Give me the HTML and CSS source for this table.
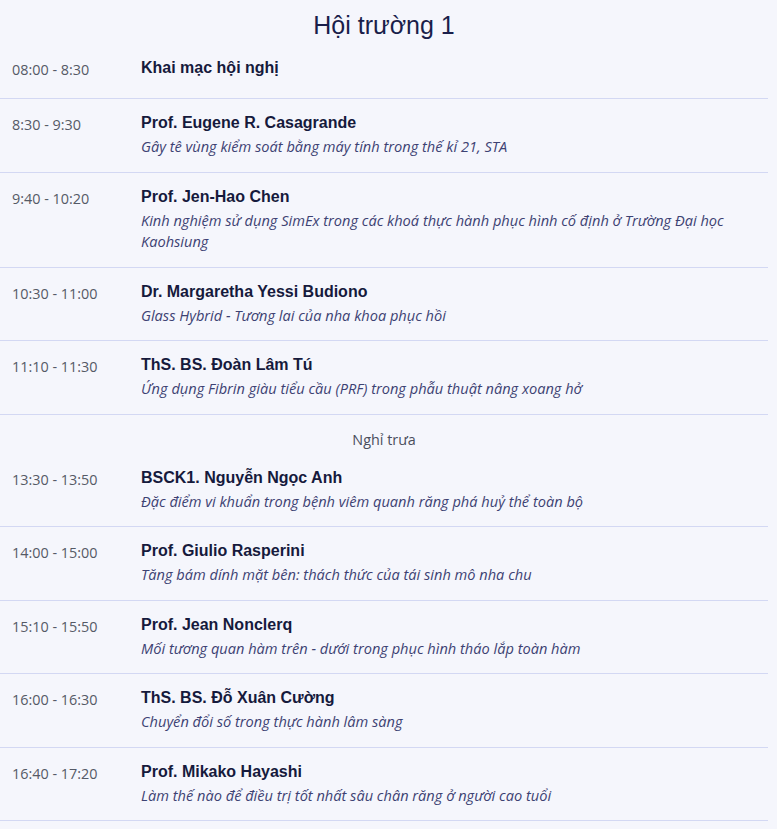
FILE: index.html
```html
<!DOCTYPE html>
<html lang="vi">
<head>
<meta charset="utf-8">
<title>Hội trường 1</title>
<link rel="stylesheet" href="styles.css">
</head>
<body>
<div class="schedule">
  <h2 class="hall-title">Hội trường 1</h2>

  <div class="row row--single">
    <div class="time">08:00 - 8:30</div>
    <div class="info"><div class="name">Khai mạc hội nghị</div></div>
  </div>

  <div class="row">
    <div class="time">8:30 - 9:30</div>
    <div class="info">
      <div class="name">Prof. Eugene R. Casagrande</div>
      <div class="topic">Gây tê vùng kiểm soát bằng máy tính trong thế kỉ 21, STA</div>
    </div>
  </div>

  <div class="row">
    <div class="time">9:40 - 10:20</div>
    <div class="info">
      <div class="name">Prof. Jen-Hao Chen</div>
      <div class="topic">Kinh nghiệm sử dụng SimEx trong các khoá thực hành phục hình cố định ở Trường Đại học Kaohsiung</div>
    </div>
  </div>

  <div class="row">
    <div class="time">10:30 - 11:00</div>
    <div class="info">
      <div class="name">Dr. Margaretha Yessi Budiono</div>
      <div class="topic">Glass Hybrid - Tương lai của nha khoa phục hồi</div>
    </div>
  </div>

  <div class="row">
    <div class="time">11:10 - 11:30</div>
    <div class="info">
      <div class="name">ThS. BS. Đoàn Lâm Tú</div>
      <div class="topic">Ứng dụng Fibrin giàu tiểu cầu (PRF) trong phẫu thuật nâng xoang hở</div>
    </div>
  </div>

  <div class="break">Nghỉ trưa</div>

  <div class="row">
    <div class="time">13:30 - 13:50</div>
    <div class="info">
      <div class="name">BSCK1. Nguyễn Ngọc Anh</div>
      <div class="topic">Đặc điểm vi khuẩn trong bệnh viêm quanh răng phá huỷ thể toàn bộ</div>
    </div>
  </div>

  <div class="row">
    <div class="time">14:00 - 15:00</div>
    <div class="info">
      <div class="name">Prof. Giulio Rasperini</div>
      <div class="topic">Tăng bám dính mặt bên: thách thức của tái sinh mô nha chu</div>
    </div>
  </div>

  <div class="row">
    <div class="time">15:10 - 15:50</div>
    <div class="info">
      <div class="name">Prof. Jean Nonclerq</div>
      <div class="topic">Mối tương quan hàm trên - dưới trong phục hình tháo lắp toàn hàm</div>
    </div>
  </div>

  <div class="row">
    <div class="time">16:00 - 16:30</div>
    <div class="info">
      <div class="name">ThS. BS. Đỗ Xuân Cường</div>
      <div class="topic">Chuyển đổi số trong thực hành lâm sàng</div>
    </div>
  </div>

  <div class="row">
    <div class="time">16:40 - 17:20</div>
    <div class="info">
      <div class="name">Prof. Mikako Hayashi</div>
      <div class="topic">Làm thế nào để điều trị tốt nhất sâu chân răng ở người cao tuổi</div>
    </div>
  </div>
</div>
</body>
</html>
```

FILE: styles.css
```css
html, body {
  margin: 0;
  padding: 0;
  background: #f5f6fc;
}

.schedule {
  width: 768px;
}

.hall-title {
  margin: 0;
  height: 44px;
  padding-top: 11px;
  box-sizing: border-box;
  text-align: center;
  font-family: "Liberation Sans", Arial, sans-serif;
  font-weight: 400;
  font-size: 25px;
  line-height: 29px;
  color: #1a1e4a;
}

.row {
  display: flex;
  padding: 14px 0 14px 0;
  border-bottom: 1px solid #d3d8f3;
}

.row--single {
  padding-bottom: 19px;
}

.time {
  width: 141px;
  flex: none;
  padding-left: 12px;
  box-sizing: border-box;
  margin-top: 2px;
  font-family: "Open Sans", sans-serif;
  font-size: 14.4px;
  line-height: 19px;
  color: #555a66;
}

.info {
  flex: 1;
  padding-right: 10px;
}

.name {
  font-family: "Liberation Sans", Arial, sans-serif;
  font-weight: 700;
  font-size: 16px;
  line-height: 19px;
  color: #161a3c;
}

.topic {
  margin-top: 4px;
  font-family: "Open Sans", sans-serif;
  font-style: italic;
  font-size: 14.6px;
  line-height: 21.5px;
  color: #3d4273;
}

.break {
  padding: 15px 0 4px;
  text-align: center;
  font-family: "Open Sans", sans-serif;
  font-size: 14.4px;
  line-height: 20px;
  color: #4a4e5c;
}
```
